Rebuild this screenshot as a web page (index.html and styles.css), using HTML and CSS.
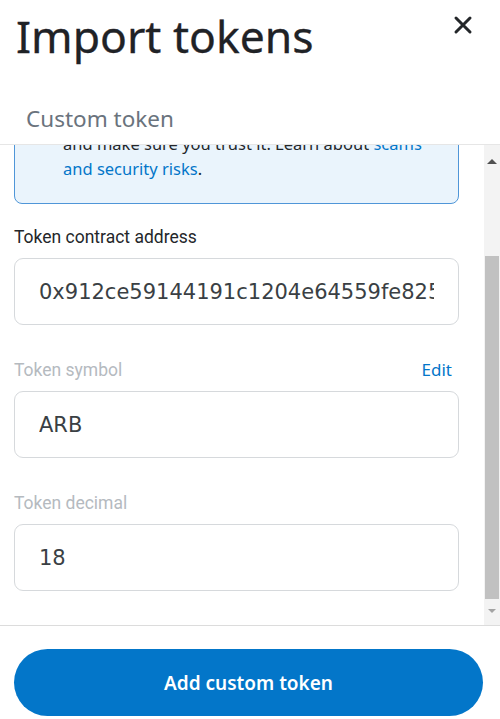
FILE: index.html
```html
<!DOCTYPE html>
<html lang="en">
<head>
<meta charset="utf-8">
<title>Import tokens</title>
<link rel="stylesheet" href="styles.css">
</head>
<body>
<div class="page">
  <header class="header">
    <div class="title-row">
      <h1 class="title">Import tokens</h1>
      <button class="close" aria-label="Close">
        <svg width="20" height="20" viewBox="0 0 20 20"><path d="M3 3 L17 17 M17 3 L3 17" stroke="#24272a" stroke-width="3" stroke-linecap="round"/></svg>
      </button>
    </div>
    <div class="tabs">
      <div class="tab">Custom token</div>
    </div>
  </header>
  <div class="scroll-area">
    <main class="viewport">
      <div class="content">
        <div class="notice">
          <div class="notice-icon">
            <svg width="16" height="16" viewBox="0 0 20 20"><circle cx="10" cy="10" r="9" fill="#0376c9"/><rect x="9" y="8.5" width="2" height="6.5" fill="#fff"/><circle cx="10" cy="6" r="1.2" fill="#fff"/></svg>
          </div>
          <p class="notice-text">Anyone can create a token, including fake<br>versions of existing tokens. Always do your<br>own research about a token before you<br>import it, add only what you need,<br>and make sure you trust it. Learn about <a class="link" href="#">scams</a><br><a class="link" href="#">and security risks</a>.</p>
        </div>
        <div class="field">
          <label class="label">Token contract address</label>
          <div class="input"><span class="value">0x912ce59144191c1204e64559fe8253a0e1261548</span></div>
        </div>
        <div class="field">
          <div class="label-row">
            <label class="label muted">Token symbol</label>
            <a class="edit" href="#">Edit</a>
          </div>
          <div class="input"><span class="value">ARB</span></div>
        </div>
        <div class="field">
          <label class="label muted">Token decimal</label>
          <div class="input"><span class="value">18</span></div>
        </div>
      </div>
    </main>
    <div class="scrollbar" aria-hidden="true">
      <div class="sb-btn"><span class="arrow-up"></span></div>
      <div class="sb-track"><div class="sb-thumb"></div></div>
      <div class="sb-btn"><span class="arrow-down"></span></div>
    </div>
  </div>
  <footer class="footer">
    <button class="primary">Add custom token</button>
  </footer>
</div>
</body>
</html>
```
FILE: styles.css
```css
html, body {
  margin: 0;
  padding: 0;
  background: #ffffff;
}
body {
  font-family: "Noto Sans", "Lato", sans-serif;
  color: #24272a;
}
.page {
  width: 500px;
  height: 719px;
  display: flex;
  flex-direction: column;
  overflow: hidden;
}
.header {
  flex: none;
  height: 144px;
  border-bottom: 1px solid #e6e6e6;
}
.title-row {
  display: flex;
  justify-content: space-between;
  align-items: flex-start;
  padding: 9px 27px 0 16px;
}
.title {
  margin: 0;
  font-size: 44.5px;
  font-weight: 400;
  line-height: 54px;
  color: #1f2226;
  -webkit-text-stroke: 0.3px #1f2226;
}
.close {
  border: 0;
  background: none;
  padding: 0;
  margin-top: 6px;
  width: 20px;
  height: 20px;
  display: flex;
  align-items: center;
  justify-content: center;
}
.tabs {
  padding: 43px 0 0 26px;
}
.tab {
  font-size: 22.5px;
  line-height: 26px;
  color: #6a737d;
}
.scroll-area {
  flex: 1;
  min-height: 0;
  display: flex;
}
.viewport {
  flex: 1;
  min-width: 0;
  overflow: hidden;
  display: flex;
  flex-direction: column-reverse;
}
.content {
  flex: none;
  padding: 16px 25px 34px 14px;
}
.notice {
  display: flex;
  gap: 16px;
  padding: 16px 16px 22px 16px;
  border: 1px solid #4f96d8;
  border-radius: 8px;
  background: #eaf4fc;
}
.notice-icon {
  flex: none;
  padding-top: 4px;
}
.notice-text {
  margin: 0;
  font-size: 16.5px;
  line-height: 25px;
  color: #24272a;
}
.link {
  color: #0376c9;
  text-decoration: none;
}
.field {
  margin-top: 33px;
}
.notice + .field {
  margin-top: 21px;
}
.label-row {
  display: flex;
  justify-content: space-between;
  align-items: baseline;
  padding-right: 7px;
}
.label {
  display: block;
  font-family: "Roboto", "Noto Sans", sans-serif;
  font-size: 17.5px;
  line-height: 24px;
  color: #24272a;
  margin-bottom: 9px;
}
.label.muted {
  color: #b5babf;
}
.edit {
  font-size: 17px;
  color: #0376c9;
  text-decoration: none;
}
.input {
  height: 67px;
  box-sizing: border-box;
  border: 1px solid #d6d9dc;
  border-radius: 9px;
  padding: 0 24px;
  display: flex;
  align-items: center;
  font-family: "DejaVu Sans", sans-serif;
  font-size: 21px;
  color: #3a3f44;
}
.value {
  flex: 1;
  min-width: 0;
  white-space: nowrap;
  overflow: hidden;
}
.scrollbar {
  flex: none;
  width: 16px;
  display: flex;
  flex-direction: column;
  background: #f3f3f3;
  padding: 8px 0 6px;
}
.sb-btn {
  flex: none;
  height: 16px;
  display: flex;
  align-items: center;
  justify-content: center;
}
.arrow-up {
  width: 0;
  height: 0;
  border-left: 5px solid transparent;
  border-right: 5px solid transparent;
  border-bottom: 5px solid #505050;
}
.arrow-down {
  width: 0;
  height: 0;
  border-left: 4px solid transparent;
  border-right: 4px solid transparent;
  border-top: 4px solid #a3a3a3;
}
.sb-track {
  flex: 1;
  display: flex;
  flex-direction: column;
  padding: 87px 1px 4px;
}
.sb-thumb {
  flex: 1;
  background: #c1c1c1;
}
.footer {
  flex: none;
  border-top: 1px solid #dcdcdc;
  padding: 23px 17px 3px 14px;
}
.primary {
  display: block;
  width: 100%;
  height: 67px;
  border: 0;
  border-radius: 34px;
  background: #0376c9;
  color: #ffffff;
  font-family: "Noto Sans", "Lato", sans-serif;
  font-size: 19px;
  font-weight: 600;
}
```
